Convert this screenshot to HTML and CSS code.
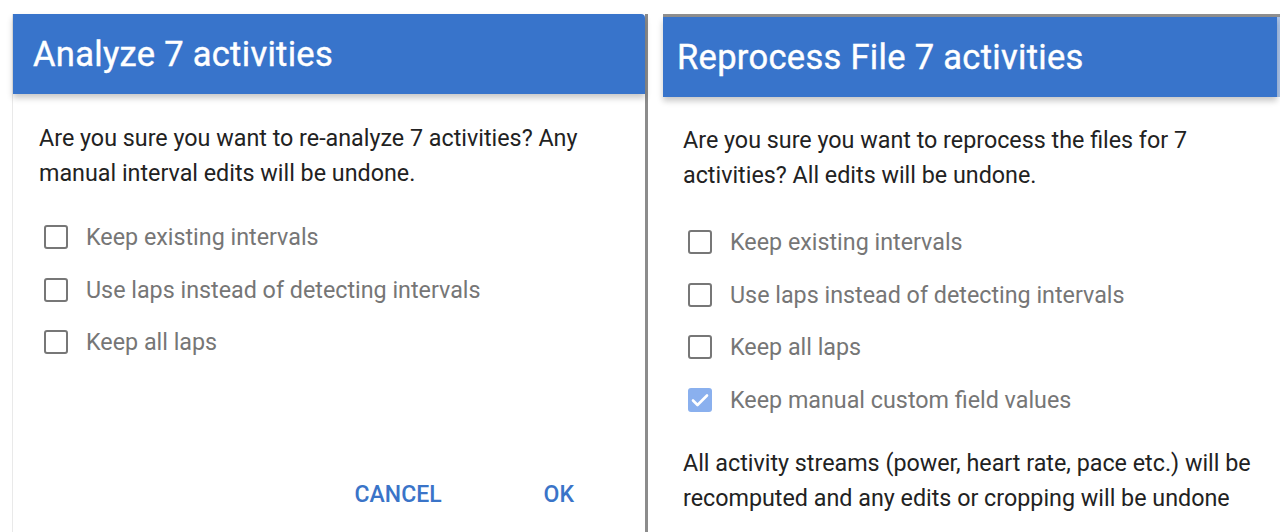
FILE: index.html
```html
<!DOCTYPE html>
<html>
<head>
<meta charset="utf-8">
<link rel="stylesheet" href="styles.css">
</head>
<body>
<div class="page">
  <section class="shot shot-left">
    <div class="dialog">
      <header class="title">Analyze 7 activities</header>
      <div class="content">
        <p class="text">Are you sure you want to re-analyze 7 activities? Any manual interval edits will be undone.</p>
        <ul class="options">
          <li class="option"><span class="box"></span><span class="label">Keep existing intervals</span></li>
          <li class="option"><span class="box"></span><span class="label">Use laps instead of detecting intervals</span></li>
          <li class="option"><span class="box"></span><span class="label">Keep all laps</span></li>
        </ul>
      </div>
      <div class="actions">
        <button class="btn">Cancel</button>
        <button class="btn">OK</button>
      </div>
    </div>
  </section>
  <section class="shot shot-right">
    <div class="dialog dialog-right">
      <header class="title title-right">Reprocess File 7 activities</header>
      <div class="content content-right">
        <p class="text">Are you sure you want to reprocess the files for 7 activities? All edits will be undone.</p>
        <ul class="options options-right">
          <li class="option"><span class="box"></span><span class="label">Keep existing intervals</span></li>
          <li class="option"><span class="box"></span><span class="label">Use laps instead of detecting intervals</span></li>
          <li class="option"><span class="box"></span><span class="label">Keep all laps</span></li>
          <li class="option"><span class="box checked"><svg viewBox="0 0 24 24" width="24" height="24"><path d="M5 12.5l4.5 4.5L19 7.5" fill="none" stroke="#fff" stroke-width="2.6" stroke-linecap="round" stroke-linejoin="round"/></svg></span><span class="label">Keep manual custom field values</span></li>
        </ul>
        <p class="text note">All activity streams (power, heart rate, pace etc.) will be recomputed and any edits or cropping will be undone</p>
      </div>
    </div>
  </section>
</div>
</body>
</html>
```

FILE: styles.css
```css
* { box-sizing: border-box; }
html, body { margin: 0; padding: 0; background: #fff; }
body { font-family: Roboto, "Noto Sans", sans-serif; overflow: hidden; }

.page {
  display: flex;
  width: 1280px;
  height: 532px;
  overflow: hidden;
}

.shot { height: 532px; }

.shot-left {
  width: 648px;
  padding: 14px 0 0 12px;
}

.shot-right {
  flex: 1;
  margin-left: 15px;
  padding-top: 14px;
}

.dialog {
  height: 100%;
  background: #fff;
  border-left: 1px solid #e9e9e9;
  border-right: 3px solid #8c8c8c;
  display: flex;
  flex-direction: column;
}

.dialog-right {
  border-left: none;
  border-right: none;
  border-top: 3px solid #8f8f8f;
  position: relative;
}

.title {
  height: 80px;
  background: #3874cb;
  color: #fff;
  font-size: 34.5px;
  font-weight: 400;
  display: flex;
  align-items: center;
  padding-left: 20px;
  border-top-right-radius: 4px;
  box-shadow: 0 4px 6px rgba(0,0,0,0.22);
  position: relative;
  z-index: 1;
  letter-spacing: 0.3px;
  -webkit-text-stroke: 0.4px #fff;
}

.title-right {
  padding-left: 14px;
  margin-right: 3px;
  border-top-right-radius: 0;
}

.dialog-right::after {
  content: "";
  position: absolute;
  top: 0;
  right: 0;
  width: 3px;
  height: 80px;
  background: #aac3e8;
}

.content {
  padding: 27px 0 0 26px;
}

.content-right {
  padding: 26px 0 0 20px;
}

.text {
  margin: 0;
  font-size: 23.3px;
  line-height: 35px;
  color: #222;
  max-width: 560px;
}

.options {
  list-style: none;
  margin: 20px 0 0 0;
  padding: 0;
}

.options-right { margin-top: 23px; }

.option {
  display: flex;
  align-items: center;
  height: 52.5px;
  padding-left: 5px;
}

.box {
  width: 24px;
  height: 24px;
  border: 2.5px solid #777;
  border-radius: 3px;
  flex: none;
  display: flex;
  align-items: center;
  justify-content: center;
}

.box.checked {
  border: none;
  background: #8ab0ee;
}

.label {
  margin-left: 18px;
  font-size: 23.3px;
  color: #767676;
}

.note {
  margin-top: 20px;
  max-width: 590px;
}

.actions {
  margin-top: auto;
  margin-bottom: 24px;
  display: flex;
  justify-content: flex-end;
  gap: 102px;
  padding-right: 71px;
}

.btn {
  border: none;
  background: none;
  padding: 0;
  font-family: Roboto, "Noto Sans", sans-serif;
  font-size: 23px;
  font-weight: 500;
  color: #3a74c8;
  text-transform: uppercase;
  letter-spacing: 0;
  line-height: 26px;
}
```
